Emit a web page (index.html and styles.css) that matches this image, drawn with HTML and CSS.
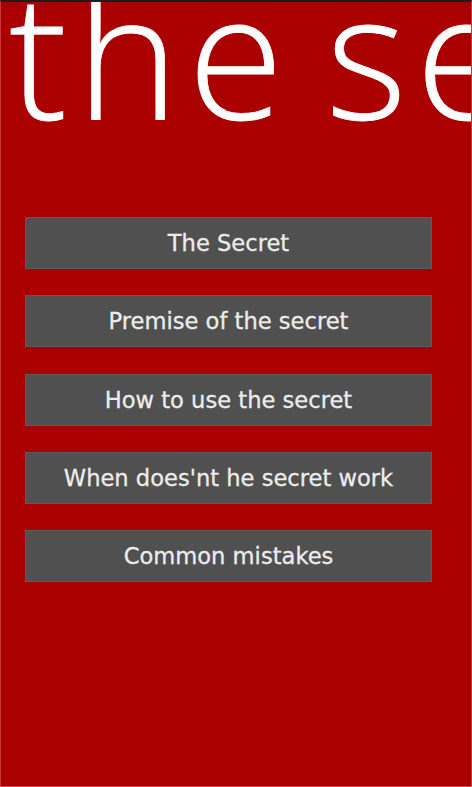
FILE: index.html
```html
<!DOCTYPE html>
<html>
<head>
<meta charset="utf-8">
<link rel="stylesheet" href="styles.css">
</head>
<body>
<div class="page">
  <header class="title-wrap">
    <h1 class="title">the secret</h1>
  </header>
  <nav class="menu">
    <button class="menu-btn">The Secret</button>
    <button class="menu-btn">Premise of the secret</button>
    <button class="menu-btn">How to use the secret</button>
    <button class="menu-btn">When does'nt he secret work</button>
    <button class="menu-btn">Common mistakes</button>
  </nav>
</div>
</body>
</html>
```
FILE: styles.css
```css
html, body {
  margin: 0;
  padding: 0;
  height: 100%;
}
body {
  background: #ab0000;
  overflow: hidden;
}
.page {
  box-sizing: border-box;
  height: 787px;
  width: 472px;
  border-top: 2px solid #1c1c1c;
  border-left: 1px solid #c43a3a;
  border-right: 1px solid #c43a3a;
  border-bottom: 1px solid #d05050;
  background: #ab0000;
  display: flex;
  flex-direction: column;
}
.title-wrap {
  height: 215px;
  overflow: hidden;
}
.title {
  margin: 0;
  padding-left: 8px;
  font-family: "Open Sans", "DejaVu Sans", sans-serif;
  font-weight: 300;
  font-size: 174px;
  line-height: 150px;
  margin-top: -25px;
  color: #ffffff;
  white-space: nowrap;
  letter-spacing: 9px;
  word-spacing: -21px;
  -webkit-text-stroke: 0.8px #ffffff;
}
.menu {
  display: flex;
  flex-direction: column;
  gap: 26.3px;
  padding-left: 24px;
}
.menu-btn {
  box-sizing: border-box;
  width: 407px;
  height: 52px;
  background: #505050;
  border: 1px solid #5c5c5c;
  color: #ececec;
  font-family: "DejaVu Sans", Verdana, sans-serif;
  font-size: 22.6px;
  padding: 0;
  text-align: center;
  -webkit-text-stroke: 0.3px #ececec;
}
```
